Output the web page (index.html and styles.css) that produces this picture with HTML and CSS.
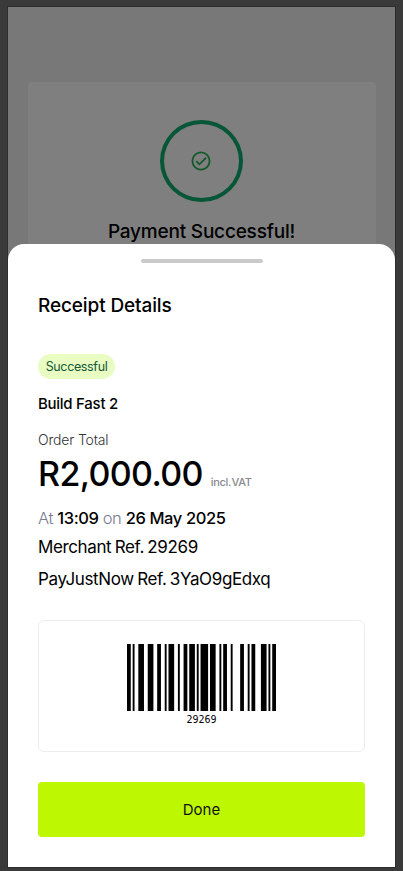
FILE: index.html
```html
<!DOCTYPE html>
<html lang="en">
<head>
<meta charset="utf-8">
<title>Receipt Details</title>
<link rel="stylesheet" href="styles.css">
</head>
<body>
<main class="phone">
  <section class="payment">
    <div class="ring">
      <svg class="check" viewBox="0 0 20 20" fill="none" stroke="currentColor" stroke-width="1.8"><circle cx="10" cy="10" r="8.6"/><path d="M5.2 10.2 8.4 13.3 15.2 6.6"/></svg>
    </div>
    <h1 class="payment-title">Payment Successful!</h1>
  </section>
  <section class="sheet">
    <div class="handle"></div>
    <h2 class="title">Receipt Details</h2>
    <span class="badge">Successful</span>
    <p class="merchant">Build Fast 2</p>
    <p class="label">Order Total</p>
    <p class="total"><span class="amount">R2,000.00</span><span class="vat">incl. VAT</span></p>
    <p class="date">At <b>13:09</b> on <b>26 May 2025</b></p>
    <p class="ref merchant-ref">Merchant Ref. 29269</p>
    <p class="ref pay-ref">PayJustNow Ref. 3YaO9gEdxq</p>
    <div class="barcode">
      <svg class="bars" viewBox="0 0 79 1" preserveAspectRatio="none"><path d="M0 0h2v1h-2zM3 0h1v1h-1zM6 0h3v1h-3zM11 0h3v1h-3zM16 0h2v1h-2zM20 0h1v1h-1zM22 0h3v1h-3zM27 0h1v1h-1zM30 0h2v1h-2zM33 0h3v1h-3zM37 0h1v1h-1zM39 0h4v1h-4zM44 0h3v1h-3zM49 0h1v1h-1zM51 0h2v1h-2zM55 0h1v1h-1zM60 0h2v1h-2zM64 0h1v1h-1zM66 0h2v1h-2zM71 0h3v1h-3zM75 0h1v1h-1zM77 0h2v1h-2z"/></svg>
      <span class="code">29269</span>
    </div>
    <button class="done">Done</button>
  </section>
</main>
</body>
</html>
```
FILE: styles.css
```css
* { box-sizing: border-box; }
body {
  margin: 0;
  height: 871px;
  padding: 7px 8px 4px;
  background: #3a3a3a;
  color: #000;
  font-family: Inter, "Liberation Sans", sans-serif;
  overflow: hidden;
}
h1, h2, p { margin: 0; font-weight: 400; white-space: nowrap; }
.phone {
  height: 860px;
  padding-top: 75px;
  background: #787878;
  box-shadow: 0 0 0 1px #2d2d2d;
}
.payment {
  height: 176px;
  margin: 0 19px 0 20px;
  padding-top: 38px;
  border-radius: 4px;
  background: #7f7f7f;
  display: flex;
  flex-direction: column;
  align-items: center;
}
.ring {
  width: 83px;
  height: 82px;
  margin-right: 2px;
  border: 4px solid #075638;
  border-radius: 50%;
  display: grid;
  place-items: center;
}
.check { width: 20px; height: 20px; color: #125a2c; }
.payment-title {
  margin-top: 18px;
  margin-right: 1px;
  font-size: 19px;
  line-height: 24px;
  font-weight: 500;
  letter-spacing: -0.2px;
}
.sheet {
  position: relative;
  height: 623px;
  margin-top: -14px;
  padding: 15px 30px 30px;
  border-radius: 16px 16px 0 0;
  background: #fff;
  display: flex;
  flex-direction: column;
  align-items: flex-start;
}
.handle { width: 122px; height: 4px; border-radius: 2px; background: #cacaca; align-self: center; }
.title { margin-top: 31px; font-size: 19px; line-height: 24px; font-weight: 500; letter-spacing: -0.12px; }
.badge {
  margin-top: 36px;
  width: 77px;
  height: 25px;
  border-radius: 13px;
  background: #e9fcc2;
  color: #17593b;
  font-size: 12.5px;
  line-height: 26px;
  text-align: center;
  letter-spacing: -0.35px;
}
.merchant { margin-top: 15px; font-size: 15px; line-height: 20px; font-weight: 500; letter-spacing: -0.27px; }
.label { margin-top: 17px; font-size: 14px; line-height: 18px; font-weight: 300; color: #333; letter-spacing: -0.17px; }
.total { margin-top: 3px; height: 44px; display: flex; align-items: baseline; gap: 8px; }
.amount { font-size: 34px; line-height: 43px; font-weight: 500; letter-spacing: -0.65px; }
.vat { font-size: 11px; font-weight: 500; color: #888a8f; letter-spacing: -0.3px; word-spacing: -2px; }
.date { margin-top: 12px; font-size: 16.5px; line-height: 20px; font-weight: 300; color: #797990; letter-spacing: -0.4px; }
.date b { color: #000; font-weight: 500; }
.ref { font-size: 17px; line-height: 20px; letter-spacing: -0.38px; word-spacing: -1px; }
.merchant-ref { margin-top: 9px; }
.pay-ref { margin-top: 12px; }
.barcode {
  width: 327px;
  height: 133px;
  margin-top: 31px;
  padding-top: 23px;
  border: 1px solid #ededed;
  border-radius: 6px;
  display: flex;
  flex-direction: column;
  align-items: center;
}
.bars { width: 149px; height: 67px; }
.code { margin-top: 3px; font: 10px/12px "DejaVu Sans Mono", monospace; }
.done {
  width: 327px;
  height: 55px;
  margin-top: 30px;
  padding: 0;
  border: 0;
  border-radius: 4px;
  background: #bdf702;
  color: #111;
  font: 400 15px/55px Inter, sans-serif;
}
```
